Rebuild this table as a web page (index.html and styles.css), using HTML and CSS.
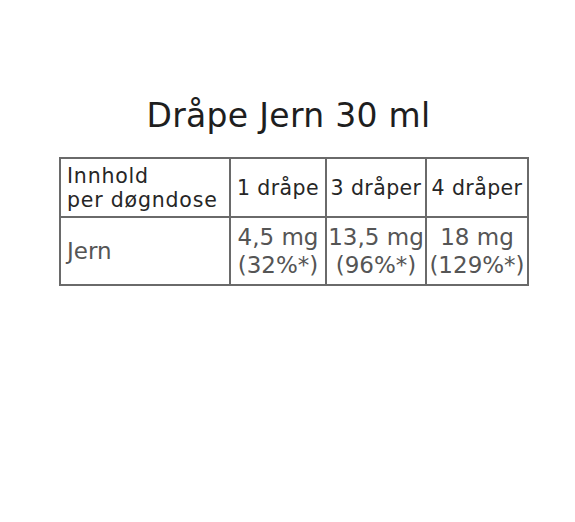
FILE: index.html
```html
<!DOCTYPE html>
<html lang="no">
<head>
<meta charset="utf-8">
<title>Dråpe Jern 30 ml</title>
<link rel="stylesheet" href="styles.css">
</head>
<body>
<main class="page">
  <h1 class="title">Dråpe Jern 30 ml</h1>
  <table class="dose-table">
    <colgroup>
      <col class="c1"><col class="c2"><col class="c3"><col class="c4">
    </colgroup>
    <thead>
      <tr class="head-row">
        <th class="label">Innhold<br>per døgndose</th>
        <th>1 dråpe</th>
        <th>3 dråper</th>
        <th>4 dråper</th>
      </tr>
    </thead>
    <tbody>
      <tr class="body-row">
        <td class="label">Jern</td>
        <td>4,5 mg<br>(32%*)</td>
        <td>13,5 mg<br>(96%*)</td>
        <td>18 mg<br>(129%*)</td>
      </tr>
    </tbody>
  </table>
</main>
</body>
</html>
```
FILE: styles.css
```css
html, body {
  margin: 0;
  padding: 0;
  background: #ffffff;
}

.page {
  width: 575px;
  height: 522px;
  padding-top: 98px;
  box-sizing: border-box;
}

.title {
  margin: 0 0 23px 0;
  text-align: center;
  font-family: "DejaVu Sans", sans-serif;
  font-weight: normal;
  font-size: 33px;
  line-height: 36px;
  color: #1e1e1e;
  letter-spacing: 0.3px;
  padding-left: 2px;
}

.dose-table {
  margin-left: 59px;
  width: 468px;
  border-collapse: collapse;
  table-layout: fixed;
  font-family: "DejaVu Sans", sans-serif;
}

.c1 { width: 170px; }
.c2 { width: 96px; }
.c3 { width: 100px; }
.c4 { width: 102px; }

.dose-table th,
.dose-table td {
  border: 2px solid #6a6a6a;
  padding: 0;
  text-align: center;
  vertical-align: middle;
  white-space: nowrap;
  overflow: hidden;
}

.head-row {
  height: 59px;
}

.head-row th {
  font-weight: normal;
  font-size: 20.5px;
  line-height: 24px;
  letter-spacing: 0.4px;
  color: #262626;
}

.head-row th.label {
  letter-spacing: 0.8px;
  padding-top: 1px;
}

.body-row {
  height: 68px;
}

.body-row td {
  font-size: 23px;
  line-height: 28px;
  color: #555555;
  font-weight: normal;
}

.dose-table .label {
  text-align: left;
  padding-left: 6px;
}
```
